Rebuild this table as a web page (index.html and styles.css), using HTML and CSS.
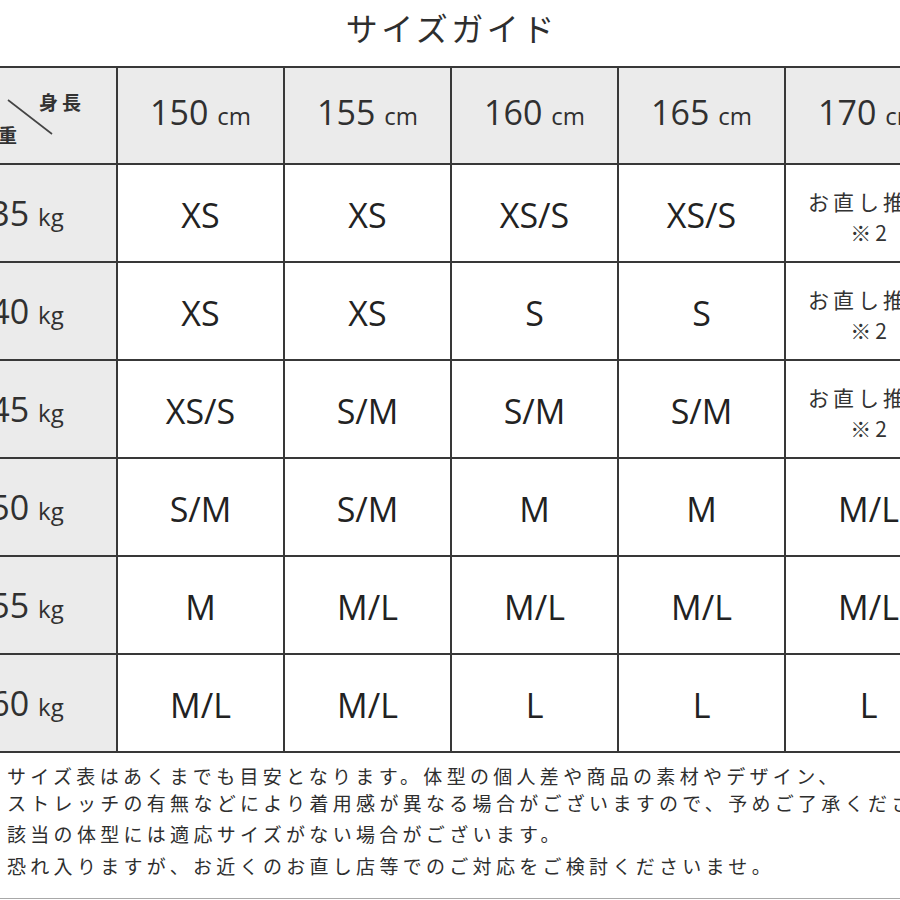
FILE: index.html
```html
<!DOCTYPE html>
<html lang="ja">
<head>
<meta charset="utf-8">
<title>サイズガイド</title>
<link rel="stylesheet" href="styles.css">
</head>
<body>
<div class="page">
  <h1 class="title">サイズガイド</h1>
  <div class="grid">
    <div class="cell head corner">
      <span class="corner-top">身長</span>
      <span class="corner-bottom">体重</span>
      <svg class="diag" width="178" height="95" viewBox="0 0 178 95"><line x1="70" y1="32" x2="114" y2="66" /></svg>
    </div>
    <div class="cell head"><span>150 <small class="unit">cm</small></span></div>
    <div class="cell head"><span>155 <small class="unit">cm</small></span></div>
    <div class="cell head"><span>160 <small class="unit">cm</small></span></div>
    <div class="cell head"><span>165 <small class="unit">cm</small></span></div>
    <div class="cell head"><span>170 <small class="unit">cm</small></span></div>

    <div class="cell side"><span>35 <small class="unit">kg</small></span></div>
    <div class="cell size">XS</div>
    <div class="cell size">XS</div>
    <div class="cell size">XS/S</div>
    <div class="cell size">XS/S</div>
    <div class="cell note"><span>お直し推奨<br>※2</span></div>

    <div class="cell side"><span>40 <small class="unit">kg</small></span></div>
    <div class="cell size">XS</div>
    <div class="cell size">XS</div>
    <div class="cell size">S</div>
    <div class="cell size">S</div>
    <div class="cell note"><span>お直し推奨<br>※2</span></div>

    <div class="cell side"><span>45 <small class="unit">kg</small></span></div>
    <div class="cell size">XS/S</div>
    <div class="cell size">S/M</div>
    <div class="cell size">S/M</div>
    <div class="cell size">S/M</div>
    <div class="cell note"><span>お直し推奨<br>※2</span></div>

    <div class="cell side"><span>50 <small class="unit">kg</small></span></div>
    <div class="cell size">S/M</div>
    <div class="cell size">S/M</div>
    <div class="cell size">M</div>
    <div class="cell size">M</div>
    <div class="cell size">M/L</div>

    <div class="cell side"><span>55 <small class="unit">kg</small></span></div>
    <div class="cell size">M</div>
    <div class="cell size">M/L</div>
    <div class="cell size">M/L</div>
    <div class="cell size">M/L</div>
    <div class="cell size">M/L</div>

    <div class="cell side"><span>60 <small class="unit">kg</small></span></div>
    <div class="cell size">M/L</div>
    <div class="cell size">M/L</div>
    <div class="cell size">L</div>
    <div class="cell size">L</div>
    <div class="cell size">L</div>
  </div>
  <div class="notes">
    <p class="note-a">サイズ表はあくまでも目安となります。体型の個人差や商品の素材やデザイン、<br>ストレッチの有無などにより着用感が異なる場合がございますので、予めご了承くださいませ。</p>
    <p class="note-b">該当の体型には適応サイズがない場合がございます。<br>恐れ入りますが、お近くのお直し店等でのご対応をご検討くださいませ。</p>
  </div>
</div>
</body>
</html>
```

FILE: styles.css
```css
html, body {
  margin: 0;
  padding: 0;
  background: #ffffff;
  overflow: hidden;
}

body {
  width: 900px;
  height: 900px;
  font-family: "Open Sans", "Noto Sans CJK JP", sans-serif;
  color: #2a2a2a;
}

.page {
  width: 900px;
  overflow: hidden;
}

.title {
  margin: 0 0 12px 0;
  height: 54px;
  line-height: 54px;
  text-align: center;
  font-family: "Noto Sans CJK JP", sans-serif;
  font-weight: 400;
  font-size: 32px;
  letter-spacing: 3.5px;
  padding-left: 3.5px;
  color: #2e2e2e;
}

.grid {
  display: grid;
  grid-template-columns: 178px repeat(5, 165px);
  grid-template-rows: 95px repeat(6, 96px);
  gap: 2px;
  padding: 2px 0;
  margin-left: -62px;
  width: 1013px;
  background: #383838;
}

.cell {
  background: #ffffff;
  display: flex;
  align-items: center;
  justify-content: center;
  text-align: center;
  box-sizing: border-box;
}

.head, .side {
  background: #ebebeb;
  font-size: 34px;
  color: #303030;
}

.head span {
  padding-bottom: 8px;
}

.side span {
  padding-top: 0;
}

.unit {
  font-size: 24px;
}

.size {
  font-size: 34px;
  color: #222222;
  padding-top: 4px;
}

.note {
  font-family: "Noto Sans CJK JP", sans-serif;
  font-size: 21px;
  line-height: 31px;
  letter-spacing: 4px;
  color: #333333;
  padding-left: 4px;
  padding-top: 8px;
}

.corner {
  position: relative;
  font-family: "Noto Sans CJK JP", sans-serif;
  font-size: 19px;
  font-weight: 700;
  letter-spacing: 4px;
  color: #333333;
}

.corner-top {
  position: absolute;
  left: 101px;
  top: 22px;
  line-height: 24px;
}

.corner-bottom {
  position: absolute;
  left: 37px;
  top: 55px;
  line-height: 24px;
}

.diag {
  position: absolute;
  left: 0;
  top: 0;
}

.diag line {
  stroke: #444444;
  stroke-width: 1.6;
}

.notes {
  padding: 9px 0 16px 7px;
  border-bottom: 1px solid #a8a8a8;
  font-family: "Noto Sans CJK JP", sans-serif;
  font-size: 19px;
  letter-spacing: 4.3px;
  color: #2e2e2e;
  white-space: nowrap;
}

.notes p {
  margin: 0;
}

.note-a {
  line-height: 27px;
}

.note-b {
  margin-top: 2px !important;
  line-height: 32px;
}
```
